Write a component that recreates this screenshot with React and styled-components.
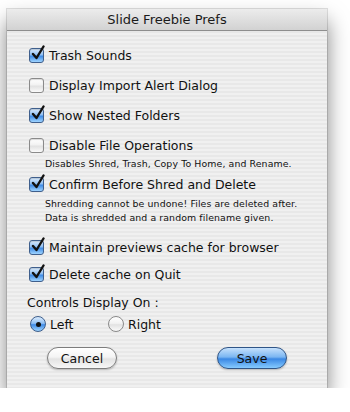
import React from 'react';
import styled, { createGlobalStyle } from 'styled-components';

const GlobalStyle = createGlobalStyle`
  html, body {
    margin: 0;
    padding: 0;
    background: #ffffff;
  }
  body {
    font-family: "DejaVu Sans", "Liberation Sans", sans-serif;
    color: #111;
  }
`;

const Window = styled.div`
  margin: 9px 0 0 7px;
  width: 320px;
  height: 379px;
  display: flex;
  flex-direction: column;
  background: repeating-linear-gradient(
    to bottom,
    #f0f0f0 0px,
    #f0f0f0 2px,
    #e8e8e8 2px,
    #e8e8e8 4px
  );
  box-shadow: 0 12px 20px rgba(0, 0, 0, 0.5), 0 0 0 1px rgba(0, 0, 0, 0.12);
`;

const TitleBar = styled.div`
  height: 21px;
  flex: none;
  display: flex;
  align-items: center;
  justify-content: center;
  background: linear-gradient(to bottom, #ececec, #d2d2d2);
  border-bottom: 1px solid #8e8e8e;
  font-size: 13px;
  color: #1a1a1a;
`;

const Content = styled.div`
  padding-left: 22px;
  display: flex;
  flex-direction: column;
`;

const Row = styled.label`
  display: flex;
  align-items: center;
  height: 18px;
  margin-top: ${(p) => p.$top}px;
  font-size: 12.5px;
  gap: 5px;
`;

const Box = styled.span`
  position: relative;
  width: 13px;
  height: 13px;
  flex: none;
  border-radius: 3px;
  border: 1px solid ${(p) => (p.$on ? '#3f5f8c' : '#8a8a8a')};
  background: ${(p) =>
    p.$on
      ? 'linear-gradient(to bottom, #dcecfd 0%, #8fc0f5 45%, #3f8be6 55%, #9fd4ff 100%)'
      : 'linear-gradient(to bottom, #ffffff 0%, #f2f2f2 45%, #e2e2e2 55%, #fafafa 100%)'};
  box-shadow: inset 0 1px 1px rgba(0, 0, 0, 0.15);
`;

const Check = styled.svg`
  position: absolute;
  left: 1px;
  top: -4px;
  width: 14px;
  height: 16px;
`;

const Note = styled.div`
  margin-top: ${(p) => p.$top}px;
  padding-left: 16px;
  font-size: 9.4px;
  line-height: 14px;
  color: #111;
  letter-spacing: 0.1px;
`;

const Heading = styled.div`
  margin-top: ${(p) => p.$top}px;
  height: 18px;
  display: flex;
  align-items: center;
  font-size: 12.5px;
  margin-left: -2px;
`;

const RadioRow = styled.div`
  display: flex;
  margin-top: ${(p) => p.$top}px;
  height: 18px;
  margin-left: 1px;
`;

const RadioItem = styled.label`
  display: flex;
  align-items: center;
  gap: 4px;
  width: 78px;
  font-size: 12.5px;
`;

const Dot = styled.span`
  width: 14px;
  height: 14px;
  flex: none;
  border-radius: 50%;
  display: flex;
  align-items: center;
  justify-content: center;
  border: 1px solid ${(p) => (p.$on ? '#3f5f8c' : '#8a8a8a')};
  background: ${(p) =>
    p.$on
      ? 'linear-gradient(to bottom, #dcecfd 0%, #8fc0f5 45%, #3f8be6 55%, #9fd4ff 100%)'
      : 'linear-gradient(to bottom, #ffffff 0%, #f2f2f2 45%, #e2e2e2 55%, #fafafa 100%)'};
  &::after {
    content: '';
    display: ${(p) => (p.$on ? 'block' : 'none')};
    width: 5px;
    height: 5px;
    border-radius: 50%;
    background: #111;
  }
`;

const Buttons = styled.div`
  display: flex;
  gap: 100px;
  margin-top: 14px;
  margin-left: 18px;
`;

const Button = styled.button`
  width: 70px;
  height: 22px;
  border-radius: 11px;
  font-family: "DejaVu Sans", "Liberation Sans", sans-serif;
  font-size: 12.5px;
  color: #111;
  padding: 0;
  border: 1px solid ${(p) => (p.$primary ? '#2f5587' : '#7c7c7c')};
  background: ${(p) =>
    p.$primary
      ? 'linear-gradient(to bottom, #c6e1fc 0%, #7bb6f2 45%, #3b88e4 55%, #86cbff 100%)'
      : 'linear-gradient(to bottom, #ffffff 0%, #f4f4f4 45%, #e3e3e3 55%, #f7f7f7 100%)'};
  box-shadow: 0 1px 2px rgba(0, 0, 0, 0.25);
`;

const CheckBox = ({ on }) => (
  <Box $on={on}>
    {on && (
      <Check viewBox="0 0 14 16">
        <path d="M2 9 L5.5 13 L12.5 1.5" fill="none" stroke="#111" strokeWidth="2.4" strokeLinecap="round" strokeLinejoin="round" />
      </Check>
    )}
  </Box>
);

const Option = ({ on, top, children }) => (
  <Row $top={top}>
    <CheckBox on={on} />
    {children}
  </Row>
);

const App = () => (
  <>
    <GlobalStyle />
    <Window>
      <TitleBar>Slide Freebie Prefs</TitleBar>
      <Content>
        <Option on top={15}>Trash Sounds</Option>
        <Option top={12}>Display Import Alert Dialog</Option>
        <Option on top={12}>Show Nested Folders</Option>
        <Option top={12}>Disable File Operations</Option>
        <Note $top={3}>Disables Shred, Trash, Copy To Home, and Rename.</Note>
        <Option on top={4}>Confirm Before Shred and Delete</Option>
        <Note $top={4}>
          Shredding cannot be undone! Files are deleted after.
          <br />
          Data is shredded and a random filename given.
        </Note>
        <Option on top={13}>Maintain previews cache for browser</Option>
        <Option on top={9}>Delete cache on Quit</Option>
        <Heading $top={10}>Controls Display On :</Heading>
        <RadioRow $top={4}>
          <RadioItem><Dot $on />Left</RadioItem>
          <RadioItem><Dot />Right</RadioItem>
        </RadioRow>
        <Buttons>
          <Button>Cancel</Button>
          <Button $primary>Save</Button>
        </Buttons>
      </Content>
    </Window>
  </>
);

export default App;
